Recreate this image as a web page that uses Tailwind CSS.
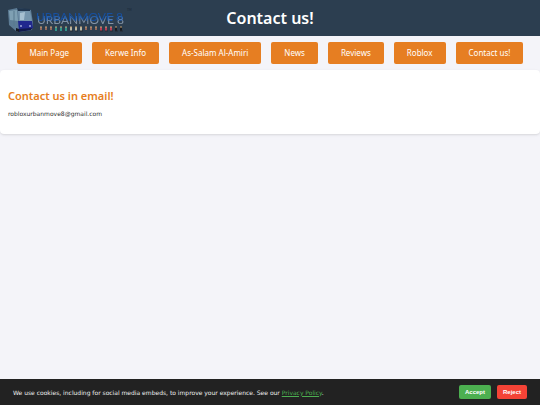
<!DOCTYPE html>
<html lang="en">

<head>
	<meta charset="UTF-8">
	<meta name="viewport" content="width=device-width, initial-scale=1.0">
	<title>Contact us!</title>
	<script src="https://cdn.jsdelivr.net/npm/@tailwindcss/browser@4"></script>
</head>

<body class="min-h-screen flex flex-col bg-[#f4f4f9] text-[#333] font-['DejaVu_Sans',sans-serif]">
	<!-- Header -->
	<header class="grid grid-cols-[1fr_auto_1fr] items-center h-9 px-2 bg-[#2c3e50] text-white">
		<a href="#" aria-label="UrbanMove 8">
			<svg class="w-[124px] h-7" viewBox="0 0 124 28">
				<defs>
					<linearGradient id="title" x1="0" y1="0" x2="0" y2="1">
						<stop offset="0.35" stop-color="#2a62ac" />
						<stop offset="0.65" stop-color="#8493a5" />
					</linearGradient>
				</defs>
				<!-- Bus -->
				<g transform="translate(0 2)">
					<path d="M0 4L9 2 23 4 25 17 24 24 11 26 8 25 1 19Z" fill="#5d7c95" />
					<path d="M1 5L9 4 10 15 2 14Z" fill="#7fa0b3" />
					<path d="M6 5V20" stroke="#58788d" />
					<path d="M10 5L22 5 24 15 11 15Z" fill="#7595ad" />
					<path d="M12 7L17 6 16 14 12 14Z" fill="#a6c0d1" />
					<path d="M9 2L22 3 22 5 10 5Z" fill="#21364e" />
					<path d="M10 15L24 15 25 22 22 24 11 25Z" fill="#20288e" />
					<path d="M10 23L24 22 23 24 11 26Z" fill="#11194c" />
					<path d="M12 20H14M21 20H23" stroke="#dce6fa" />
					<path d="M8 22L11 23 11 26 8 25Z" fill="#141722" />
				</g>
				<!-- Name -->
				<g font-family="Lato, sans-serif">
					<text class="drop-shadow-[-1px_-3px_0_#164f9f]" x="29" y="20" font-size="12" fill="url(#title)">URBANMOVE 8</text>
					<text x="119" y="7" font-size="3" fill="#172433">TM</text>
				</g>
				<!-- Passengers -->
				<g stroke-width="2">
					<path d="M33 23V26M38 23V26M43 23V26M78 23V26M83 23V26M88 23V26" stroke="#93695c" />
					<path d="M48 23V27M53 23V27M58 23V27" stroke="#32948a" />
					<path d="M63 23V27M68 23V27M73 23V27" stroke="#b9b7a5" />
					<path d="M93 23V27M98 23V27M103 23V27" stroke="#b83f55" />
					<path d="M108 23V27M113 23V27" stroke="#191b20" />
				</g>
				<path d="M32 23H34M37 23H39M42 23H44M47 23H49M52 23H54M57 23H59M62 23H64M67 23H69M72 23H74M77 23H79M82 23H84M87 23H89M92 23H94M97 23H99M102 23H104M107 23H109M112 23H114" stroke="#c3a173" />
				<path d="M62 27H65M67 27H70M72 27H75M92 27H95M97 27H100M102 27H105M107 27H110M112 27H115" stroke="#242833" />
			</svg>
		</a>
		<h1 class="font-['Noto_Sans',sans-serif] text-base font-semibold">Contact us!</h1>
	</header>

	<!-- Navigation -->
	<nav class="flex flex-wrap justify-center gap-[10px] py-[6px] font-['Noto_Sans',sans-serif] text-[8px] leading-[22px] text-white">
		<a href="#" class="px-[13px] rounded-xs bg-[#e67e22]">Main Page</a>
		<a href="#" class="px-[13px] rounded-xs bg-[#e67e22]">Kerwe Info</a>
		<a href="#" class="px-[13px] rounded-xs bg-[#e67e22]">As-Salam Al-Amiri</a>
		<a href="#" class="px-[13px] rounded-xs bg-[#e67e22]">News</a>
		<a href="#" class="px-[13px] rounded-xs bg-[#e67e22]">Reviews</a>
		<a href="#" class="px-[13px] rounded-xs bg-[#e67e22]">Roblox</a>
		<a href="#" class="px-[13px] rounded-xs bg-[#e67e22]">Contact us!</a>
	</nav>

	<!-- Content -->
	<main class="px-2 py-4 rounded bg-white shadow-sm">
		<h2 class="font-['Noto_Sans',sans-serif] text-[11px] leading-5 font-semibold text-[#e67e22]">Contact us in email!</h2>
		<p class="mt-1 text-[6px] leading-2">robloxurbanmove8@gmail.com</p>
	</main>

	<!-- Cookie notice -->
	<footer class="mt-auto flex items-center justify-between h-[26px] px-[13px] bg-[#222] text-[#eee]">
		<p class="text-[6px]">We use cookies, including for social media embeds, to improve your experience. See our <a href="#" class="text-[#4caf50] underline">Privacy Policy</a>.</p>
		<div class="flex gap-[6px] font-['Liberation_Sans',sans-serif] text-[6px] leading-[14px] font-bold text-white">
			<button type="button" class="px-[6px] rounded-xs bg-[#4caf50]">Accept</button>
			<button type="button" class="px-[6px] rounded-xs bg-[#f44336]">Reject</button>
		</div>
	</footer>
</body>

</html>
